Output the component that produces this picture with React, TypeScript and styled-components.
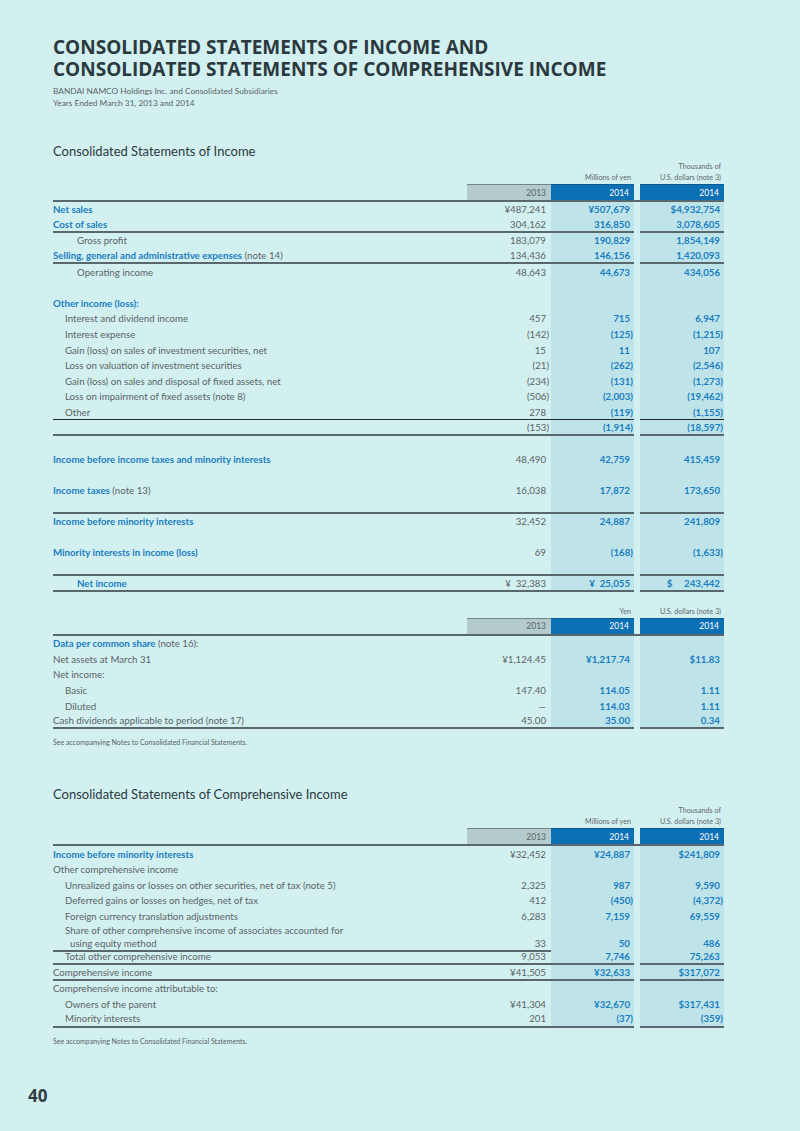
import React from 'react';
import styled, { createGlobalStyle, css } from 'styled-components';

const COLS = '414px 84px 83px 6px 84px';
const BLUE = '#1a7dc0';
const GRAY = '#5a6366';

const GlobalStyle = createGlobalStyle`
  html, body { margin: 0; padding: 0; background: #d2f0f0; }
  body { font-family: Lato, "Open Sans", sans-serif; color: ${GRAY}; }
`;

const Page = styled.div`
  width: 800px;
  min-height: 1131px;
  box-sizing: border-box;
  padding: 36px 76px 0 53px;
  display: flex;
  flex-direction: column;
`;

const Title = styled.h1`
  margin: 0;
  font-family: "Open Sans", sans-serif;
  font-weight: 700;
  font-size: 19px;
  line-height: 22px;
  color: #2b393e;
`;

const Meta = styled.p`
  margin: 5px 0 0;
  font-size: 8.3px;
  font-weight: 400;
  line-height: 12px;
  color: #5a6366;
`;

const SectionTitle = styled.h2<{ $top: number }>`
  margin: ${p => p.$top}px 0 0;
  font-size: 13px;
  font-weight: 400;
  line-height: 16px;
  color: #2b393e;
`;

const Table = styled.div<{ $top: number }>`
  margin-top: ${p => p.$top}px;
  display: flex;
  flex-direction: column;
`;

const UnitRow = styled.div`
  display: grid;
  grid-template-columns: ${COLS};
  padding-bottom: 0;
`;

const Unit = styled.div`
  text-align: right;
  padding-right: 3px;
  font-size: 7.2px;
  font-weight: 400;
  line-height: 11px;
  color: #5f686b;
  align-self: end;
`;

const HeadRow = styled.div`
  display: grid;
  grid-template-columns: ${COLS};
  height: 18px;
  margin-top: 1px;
  border-bottom: 2px solid #59686d;
  box-sizing: border-box;
`;

const Year = styled.div<{ $cur?: boolean }>`
  display: flex;
  align-items: center;
  justify-content: flex-end;
  padding-right: 5px;
  font-size: 8.5px;
  font-weight: 400;
  box-sizing: border-box;
  border-top: 1px solid ${p => (p.$cur ? '#0a5a92' : '#6f8587')};
  background: ${p => (p.$cur ? '#0c70b5' : '#b3cbcc')};
  color: ${p => (p.$cur ? '#ffffff' : GRAY)};
`;

const Gap = styled.div``;

const Blank = styled.div``;

const Label = styled.div<{ $indent: number; $multi?: boolean }>`
  display: flex;
  flex-direction: column;
  justify-content: ${p => (p.$multi ? 'flex-end' : 'center')};
  padding-left: ${p => p.$indent}px;
  font-size: 9.7px;
  font-weight: 400;
  line-height: 13px;
  white-space: nowrap;
  box-sizing: border-box;
`;

const Cont = styled.span`
  padding-left: 5px;
`;

const B = styled.span`
  color: ${BLUE};
  font-weight: 700;
`;

const Num = styled.div<{ $kind: 'prev' | 'cur' | 'usd'; $multi?: boolean }>`
  display: flex;
  align-items: ${p => (p.$multi ? 'flex-end' : 'center')};
  justify-content: flex-end;
  padding-right: ${p => (p.$kind === 'prev' ? 5 : 4)}px;
  font-size: 9.7px;
  line-height: 13px;
  white-space: pre;
  box-sizing: border-box;
  ${p =>
    p.$kind === 'prev'
      ? css`
          font-weight: 400;
          color: ${GRAY};
        `
      : css`
          font-weight: 700;
          color: ${BLUE};
          background: #bee4ea;
        `}
`;

const Close = styled.span`
  margin-right: -3px;
`;

const Row = styled.div<{ $h: number; $rule?: 'thin' | 'thick' }>`
  display: grid;
  grid-template-columns: ${COLS};
  height: ${p => p.$h}px;
  & > :not(${Gap}) {
    ${p =>
      p.$rule === 'thin'
        ? css`border-bottom: 1px solid #1f2a2e;`
        : p.$rule === 'thick'
        ? css`border-bottom: 2px solid #59686d;`
        : ''}
  }
`;

const Note = styled.p<{ $top: number }>`
  margin: ${p => p.$top}px 0 0;
  font-size: 7px;
  font-weight: 400;
  line-height: 10px;
  color: #5a6366;
`;

const PageNum = styled.div`
  margin: 40px 0 0 -25px;
  font-family: "Open Sans", sans-serif;
  font-weight: 700;
  font-size: 17px;
  line-height: 20px;
  color: #2f3d42;
`;

type Vals = [string, string, string];

const fmt = (s: string) => {
  if (s.endsWith(')')) {
    return (
      <>
        {s.slice(0, -1)}
        <Close>)</Close>
      </>
    );
  }
  return s;
};

type LineProps = {
  label?: React.ReactNode;
  indent?: number;
  v?: Vals;
  rule?: 'thin' | 'thick';
  h?: number;
  multi?: boolean;
};

const Line: React.FC<LineProps> = ({ label, indent = 0, v, rule, h = 15.6, multi }) => (
  <Row $h={h} $rule={rule}>
    <Label $indent={indent} $multi={multi}>
      {label}
    </Label>
    <Num $kind="prev" $multi={multi}>{v ? fmt(v[0]) : ''}</Num>
    <Num $kind="cur" $multi={multi}>{v ? fmt(v[1]) : ''}</Num>
    <Gap />
    <Num $kind="usd" $multi={multi}>{v ? fmt(v[2]) : ''}</Num>
  </Row>
);

const Units: React.FC<{ yen: React.ReactNode; usd: React.ReactNode }> = ({ yen, usd }) => (
  <UnitRow>
    <Blank />
    <Blank />
    <Unit>{yen}</Unit>
    <Gap />
    <Unit>{usd}</Unit>
  </UnitRow>
);

const Head: React.FC = () => (
  <HeadRow>
    <Blank />
    <Year>2013</Year>
    <Year $cur>2014</Year>
    <Gap />
    <Year $cur>2014</Year>
  </HeadRow>
);

const NoteText = 'See accompanying Notes to Consolidated Financial Statements.';

export default function App() {
  return (
    <>
      <GlobalStyle />
      <Page>
        <Title>
          CONSOLIDATED STATEMENTS OF INCOME AND
          <br />
          CONSOLIDATED STATEMENTS OF COMPREHENSIVE INCOME
        </Title>
        <Meta>
          BANDAI NAMCO Holdings Inc. and Consolidated Subsidiaries
          <br />
          Years Ended March 31, 2013 and 2014
        </Meta>

        <SectionTitle $top={34}>Consolidated Statements of Income</SectionTitle>
        <Table $top={2}>
          <Units
            yen="Millions of yen"
            usd={
              <>
                Thousands of
                <br />
                U.S. dollars (note 3)
              </>
            }
          />
          <Head />
          <Line label={<B>Net sales</B>} v={['¥487,241', '¥507,679', '$4,932,754']} />
          <Line label={<B>Cost of sales</B>} v={['304,162', '316,850', '3,078,605']} rule="thick" />
          <Line label="Gross profit" indent={24} v={['183,079', '190,829', '1,854,149']} />
          <Line
            label={
              <span>
                <B>Selling, general and administrative expenses</B> (note 14)
              </span>
            }
            v={['134,436', '146,156', '1,420,093']}
            rule="thick"
          />
          <Line label="Operating income" indent={24} v={['48,643', '44,673', '434,056']} />
          <Line />
          <Line label={<B>Other income (loss):</B>} />
          <Line label="Interest and dividend income" indent={12} v={['457', '715', '6,947']} />
          <Line label="Interest expense" indent={12} v={['(142)', '(125)', '(1,215)']} />
          <Line label="Gain (loss) on sales of investment securities, net" indent={12} v={['15', '11', '107']} />
          <Line label="Loss on valuation of investment securities" indent={12} v={['(21)', '(262)', '(2,546)']} />
          <Line label="Gain (loss) on sales and disposal of fixed assets, net" indent={12} v={['(234)', '(131)', '(1,273)']} />
          <Line label="Loss on impairment of fixed assets (note 8)" indent={12} v={['(506)', '(2,003)', '(19,462)']} />
          <Line label="Other" indent={12} v={['278', '(119)', '(1,155)']} rule="thin" />
          <Line v={['(153)', '(1,914)', '(18,597)']} rule="thick" />
          <Line />
          <Line label={<B>Income before income taxes and minority interests</B>} v={['48,490', '42,759', '415,459']} />
          <Line />
          <Line
            label={
              <span>
                <B>Income taxes</B> (note 13)
              </span>
            }
            v={['16,038', '17,872', '173,650']}
          />
          <Line rule="thick" />
          <Line label={<B>Income before minority interests</B>} v={['32,452', '24,887', '241,809']} />
          <Line />
          <Line label={<B>Minority interests in income (loss)</B>} v={['69', '(168)', '(1,633)']} />
          <Line rule="thick" />
          <Line
            label={<B>Net income</B>}
            indent={24}
            v={['¥  32,383', '¥  25,055', '$     243,442']}
            rule="thick"
          />
        </Table>

        <Table $top={14}>
          <Units yen="Yen" usd="U.S. dollars (note 3)" />
          <Head />
          <Line
            label={
              <span>
                <B>Data per common share</B> (note 16):
              </span>
            }
          />
          <Line label="Net assets at March 31" v={['¥1,124.45', '¥1,217.74', '$11.83']} />
          <Line label="Net income:" />
          <Line label="Basic" indent={12} v={['147.40', '114.05', '1.11']} />
          <Line label="Diluted" indent={12} v={['—', '114.03', '1.11']} />
          <Line label="Cash dividends applicable to period (note 17)" v={['45.00', '35.00', '0.34']} rule="thick" />
        </Table>
        <Note $top={8}>{NoteText}</Note>

        <SectionTitle $top={39}>Consolidated Statements of Comprehensive Income</SectionTitle>
        <Table $top={3}>
          <Units
            yen="Millions of yen"
            usd={
              <>
                Thousands of
                <br />
                U.S. dollars (note 3)
              </>
            }
          />
          <Head />
          <Line label={<B>Income before minority interests</B>} v={['¥32,452', '¥24,887', '$241,809']} />
          <Line label="Other comprehensive income" />
          <Line label="Unrealized gains or losses on other securities, net of tax (note 5)" indent={12} v={['2,325', '987', '9,590']} />
          <Line label="Deferred gains or losses on hedges, net of tax" indent={12} v={['412', '(450)', '(4,372)']} />
          <Line label="Foreign currency translation adjustments" indent={12} v={['6,283', '7,159', '69,559']} />
          <Line
            label={
              <>
                <span>Share of other comprehensive income of associates accounted for</span>
                <Cont>using equity method</Cont>
              </>
            }
            indent={12}
            multi
            h={25.4}
            v={['33', '50', '486']}
            rule="thick"
          />
          <Line label="Total other comprehensive income" indent={12} v={['9,053', '7,746', '75,263']} rule="thick" />
          <Line label="Comprehensive income" v={['¥41,505', '¥32,633', '$317,072']} rule="thick" />
          <Line label="Comprehensive income attributable to:" />
          <Line label="Owners of the parent" indent={12} v={['¥41,304', '¥32,670', '$317,431']} />
          <Line label="Minority interests" indent={12} v={['201', '(37)', '(359)']} rule="thick" />
        </Table>
        <Note $top={8}>{NoteText}</Note>

        <PageNum>40</PageNum>
      </Page>
    </>
  );
}
